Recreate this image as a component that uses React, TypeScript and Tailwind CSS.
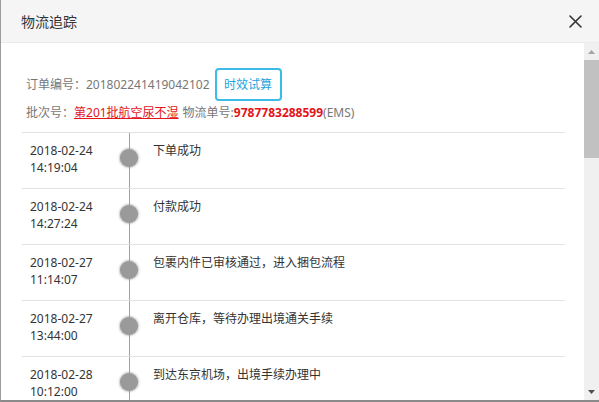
import React from 'react';

type Track = {
    date: string;
    time: string;
    text: string;
};

const tracks: Track[] = [
    {date: '2018-02-24', time: '14:19:04', text: '下单成功'},
    {date: '2018-02-24', time: '14:27:24', text: '付款成功'},
    {date: '2018-02-27', time: '11:14:07', text: '包裹内件已审核通过，进入捆包流程'},
    {date: '2018-02-27', time: '13:44:00', text: '离开仓库，等待办理出境通关手续'},
    {date: '2018-02-28', time: '10:12:00', text: '到达东京机场，出境手续办理中'},
];

const font = {fontFamily: '"Noto Sans", "Noto Sans CJK SC", sans-serif'};

const TrackRow: React.FC<{item: Track}> = ({item}) => (
    <div className="flex h-[56px] shrink-0 border-b border-[#e3e3e3]">
        <div className="w-[98px] pl-[8px] pt-[9px] text-[12px] leading-[17px] text-[#333]">
            <div>{item.date}</div>
            <div>{item.time}</div>
        </div>
        <div className="relative w-[18px]">
            <div className="absolute left-[8.5px] top-0 bottom-0 w-px bg-[#a0a0a0]"/>
            <div className="absolute left-0 top-[16px] h-[18px] w-[18px] rounded-full bg-[#9a9a9a] shadow-[0_0_2px_1px_rgba(150,150,150,0.6)]"/>
        </div>
        <div className="pl-[15px] pt-[9px] text-[12px] leading-[17px] text-[#333]">{item.text}</div>
    </div>
);

export default function App() {
    return (
        <div className="flex h-[402px] w-[599px] flex-col overflow-hidden border-l border-b-2 border-l-[#9c9c9c] border-b-[#8a8a8a] bg-white"
             style={font}>
            <div className="flex h-[43px] shrink-0 items-center justify-between border-b border-[#ebebeb] bg-[#f5f5f5] pl-[20px] pr-[17px]">
                <div className="text-[14px] text-[#333]">物流追踪</div>
                <svg width="13" height="13" viewBox="0 0 13 13" className="text-[#333]">
                    <path d="M1 1L12 12M12 1L1 12" stroke="currentColor" strokeWidth="1.6" strokeLinecap="round"/>
                </svg>
            </div>

            <div className="flex min-h-0 flex-1">
                <div className="min-w-0 flex-1 overflow-hidden pt-[25px]">
                    <div className="flex h-[33px] items-center pl-[25px] text-[12px] text-[#777]">
                        <span>订单编号：201802241419042102</span>
                        <button
                            className="ml-[5px] h-[33px] w-[67px] rounded-[4px] border-2 border-[#3bbbe8] text-[12px] text-[#23a3dc]">
                            时效试算
                        </button>
                    </div>
                    <div className="mt-[2px] flex h-[20px] items-center whitespace-nowrap pl-[25px] text-[12px] text-[#777]">
                        <span>批次号：</span>
                        <a className="text-[#e3141b] underline">第201批航空尿不湿</a>
                        <span className="ml-[4px]">物流单号:</span>
                        <span className="font-bold text-[#e3141b]">9787783288599</span>
                        <span>(EMS)</span>
                    </div>
                    <div className="ml-[21px] mr-[19px] mt-[9px] flex flex-col border-t border-[#e3e3e3]">
                        {tracks.map((t) => (
                            <TrackRow key={t.date + t.time} item={t}/>
                        ))}
                    </div>
                </div>

                <div className="flex w-[15px] shrink-0 flex-col bg-[#f0f0f0]">
                    <div className="flex h-[17px] items-center justify-center">
                        <svg width="7" height="4" viewBox="0 0 7 4"><path d="M3.5 0L7 4H0z" fill="#a3a3a3"/></svg>
                    </div>
                    <div className="h-[98px] bg-[#c1c1c1]"/>
                    <div className="flex-1"/>
                    <div className="flex h-[17px] items-center justify-center">
                        <svg width="7" height="4" viewBox="0 0 7 4"><path d="M0 0H7L3.5 4z" fill="#505050"/></svg>
                    </div>
                </div>
            </div>
        </div>
    );
}
